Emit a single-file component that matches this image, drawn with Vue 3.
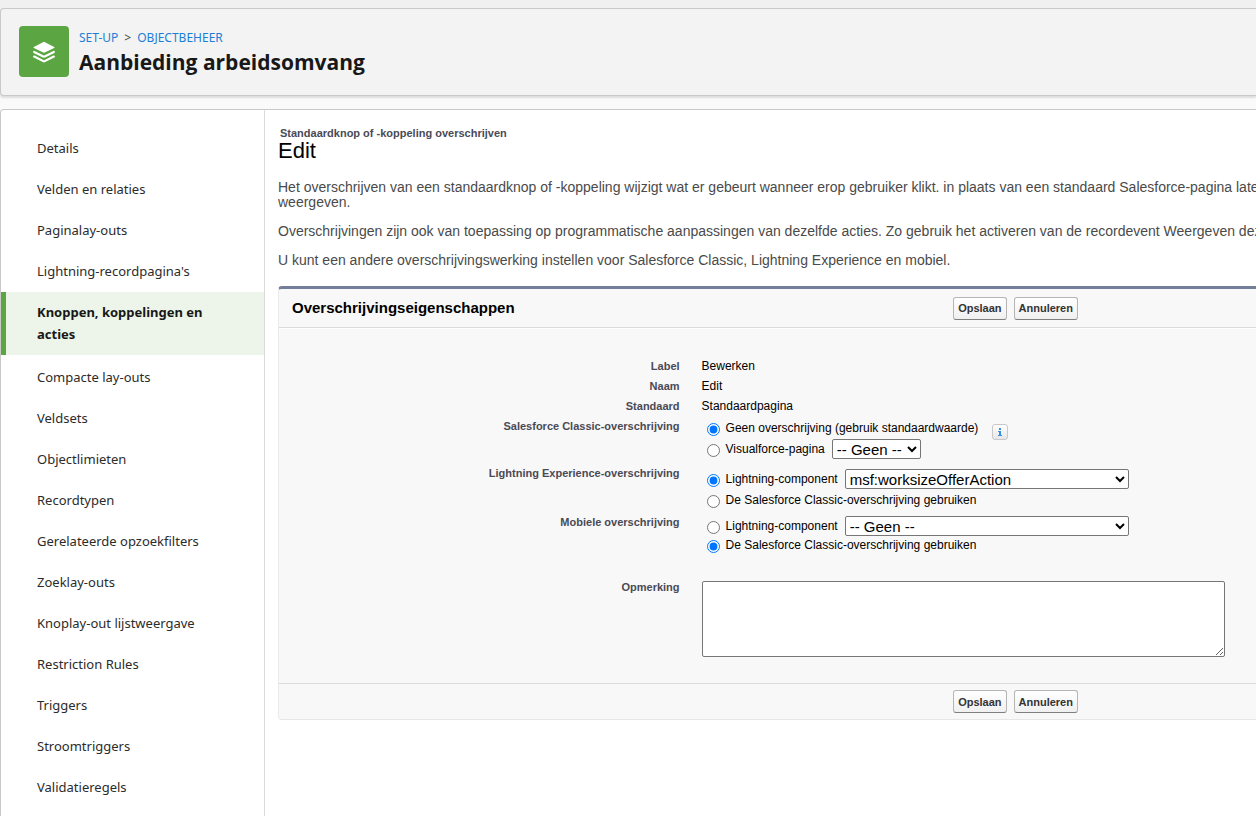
<script setup>
import { ref } from 'vue'

const navItems = [
  'Details',
  'Velden en relaties',
  'Paginalay-outs',
  "Lightning-recordpagina's",
  'Knoppen, koppelingen en acties',
  'Compacte lay-outs',
  'Veldsets',
  'Objectlimieten',
  'Recordtypen',
  'Gerelateerde opzoekfilters',
  'Zoeklay-outs',
  'Knoplay-out lijstweergave',
  'Restriction Rules',
  'Triggers',
  'Stroomtriggers',
  'Validatieregels',
]
const activeItem = 'Knoppen, koppelingen en acties'

const facts = [
  { label: 'Label', value: 'Bewerken' },
  { label: 'Naam', value: 'Edit' },
  { label: 'Standaard', value: 'Standaardpagina' },
]

const classic = ref('none')
const lightning = ref('component')
const mobile = ref('classic')
const comment = ref('')
</script>

<template>
  <div class="page">
    <header class="banner">
      <span class="banner-icon">
        <svg viewBox="0 0 22 22" width="22" height="22" aria-hidden="true">
          <path d="M11 0.8 21.2 6.1Q21.9 6.6 21.2 7.1L11.7 11.6Q11 11.9 10.3 11.6L0.8 7.1Q0.1 6.6 0.8 6.1Z" fill="#fff" />
          <path d="M1.2 10.9 10.3 15.4Q11 15.8 11.7 15.4L20.8 10.9M1.2 15.6 10.3 20.1Q11 20.5 11.7 20.1L20.8 15.6" fill="none" stroke="#fff" stroke-width="2.2" stroke-linecap="round" />
        </svg>
      </span>
      <div class="banner-text">
        <nav class="crumbs" aria-label="Kruimelpad">
          <a href="#">SET-UP</a><span class="sep">&gt;</span><a href="#">OBJECTBEHEER</a>
        </nav>
        <h1>Aanbieding arbeidsomvang</h1>
      </div>
    </header>

    <div class="workspace">
      <nav class="sidebar">
        <ul>
          <li v-for="item in navItems" :key="item" :class="{ active: item === activeItem }">
            <a href="#">{{ item }}</a>
          </li>
        </ul>
      </nav>

      <main class="content">
        <p class="kicker">Standaardknop of -koppeling overschrijven</p>
        <h2>Edit</h2>
        <div class="intro">
          <p>Het overschrijven van een standaardknop of -koppeling wijzigt wat er gebeurt wanneer erop gebruiker klikt. in plaats van een standaard Salesforce-pagina laten weergeven<br>weergeven.</p>
          <p>Overschrijvingen zijn ook van toepassing op programmatische aanpassingen van dezelfde acties. Zo gebruik het activeren van de recordevent Weergeven dezelfde</p>
          <p>U kunt een andere overschrijvingswerking instellen voor Salesforce Classic, Lightning Experience en mobiel.</p>
        </div>

        <form class="panel" @submit.prevent>
          <div class="bar bar-top">
            <h3>Overschrijvingseigenschappen</h3>
            <div class="actions">
              <button type="submit">Opslaan</button>
              <button type="button">Annuleren</button>
            </div>
          </div>

          <div class="fields">
            <div v-for="fact in facts" :key="fact.label" class="row">
              <span class="name">{{ fact.label }}</span>
              <span class="value">{{ fact.value }}</span>
            </div>

            <div class="row classic" role="radiogroup" aria-labelledby="classic-name">
              <span id="classic-name" class="name">Salesforce Classic-overschrijving</span>
              <div class="options">
                <div class="option">
                  <input id="classic-none" v-model="classic" type="radio" name="classic" value="none">
                  <label for="classic-none">Geen overschrijving (gebruik standaardwaarde)</label>
                  <button type="button" class="info" aria-label="Informatie">
                    <svg viewBox="0 0 14 14" width="14" height="14" aria-hidden="true">
                      <path d="M6 3h2v2H6zM5 6h3v4h1v1H5v-1h1V7H5z" fill="#3b8ede" />
                    </svg>
                  </button>
                </div>
                <div class="option">
                  <input id="classic-vf" v-model="classic" type="radio" name="classic" value="vf">
                  <label for="classic-vf">Visualforce-pagina</label>
                  <select class="short" aria-label="Visualforce-pagina"><option>-- Geen --</option></select>
                </div>
              </div>
            </div>

            <div class="row lightning" role="radiogroup" aria-labelledby="lightning-name">
              <span id="lightning-name" class="name">Lightning Experience-overschrijving</span>
              <div class="options">
                <div class="option">
                  <input id="lightning-component" v-model="lightning" type="radio" name="lightning" value="component">
                  <label for="lightning-component">Lightning-component</label>
                  <select class="long" aria-label="Lightning-component"><option>msf:worksizeOfferAction</option></select>
                </div>
                <div class="option">
                  <input id="lightning-classic" v-model="lightning" type="radio" name="lightning" value="classic">
                  <label for="lightning-classic">De Salesforce Classic-overschrijving gebruiken</label>
                </div>
              </div>
            </div>

            <div class="row mobile" role="radiogroup" aria-labelledby="mobile-name">
              <span id="mobile-name" class="name">Mobiele overschrijving</span>
              <div class="options">
                <div class="option">
                  <input id="mobile-component" v-model="mobile" type="radio" name="mobile" value="component">
                  <label for="mobile-component">Lightning-component</label>
                  <select class="long" aria-label="Lightning-component mobiel"><option>-- Geen --</option></select>
                </div>
                <div class="option">
                  <input id="mobile-classic" v-model="mobile" type="radio" name="mobile" value="classic">
                  <label for="mobile-classic">De Salesforce Classic-overschrijving gebruiken</label>
                </div>
              </div>
            </div>

            <div class="row comment">
              <label for="comment" class="name">Opmerking</label>
              <div class="options">
                <textarea id="comment" v-model="comment"></textarea>
              </div>
            </div>
          </div>

          <div class="bar bar-bottom">
            <div class="actions">
              <button type="submit">Opslaan</button>
              <button type="button">Annuleren</button>
            </div>
          </div>
        </form>
      </main>
    </div>
  </div>
</template>

<style>
body {
  margin: 0;
  overflow: hidden;
}
</style>

<style scoped>
.page {
  box-sizing: border-box;
  display: flex;
  flex-direction: column;
  gap: 13px;
  height: 100vh;
  padding-top: 8px;
  overflow: hidden;
  background: linear-gradient(#f0f0f0 0, #f0f0f0 90px, #fafafa 100px);
  font-family: "Liberation Sans", Arial, sans-serif;
  color: #000;
}

h1, h2, h3, p, ul {
  margin: 0;
  padding: 0;
}

.banner {
  display: flex;
  flex: none;
  gap: 10px;
  padding: 17px 18px 18px;
  border: 1px solid #c9c9c9;
  border-right: 0;
  border-radius: 4px 0 0 4px;
  background: #f3f3f3;
  box-shadow: 0 2px 2px rgba(0, 0, 0, 0.1);
  font-family: "Open Sans", "Segoe UI", sans-serif;
}

.banner-icon {
  display: flex;
  align-items: center;
  justify-content: center;
  width: 50px;
  height: 51px;
  border-radius: 4px;
  background: #5ba543;
}

.crumbs {
  display: flex;
  gap: 6px;
  padding-top: 2px;
  font-family: "Noto Sans", "Segoe UI", sans-serif;
  font-size: 12px;
  line-height: 20px;
}

.crumbs a {
  color: #1b7fd6;
  text-decoration: none;
}

.sep {
  color: #444;
}

h1 {
  font-size: 21px;
  line-height: 28px;
  font-weight: 700;
  color: #181818;
}

.workspace {
  display: flex;
  flex: 1 0 auto;
  border: 1px solid #c9c9c9;
  border-right: 0;
  border-bottom: 0;
  border-radius: 4px 0 0;
  background: #fff;
}

.sidebar {
  box-sizing: border-box;
  flex: none;
  width: 264px;
  padding-top: 18px;
  border-right: 1px solid #dddbda;
  font-family: "Noto Sans", "Segoe UI", sans-serif;
  font-size: 13px;
  line-height: 22px;
}

.sidebar ul {
  list-style: none;
}

.sidebar a {
  display: block;
  padding: 9px 40px 10px 36px;
  color: #2b2b2b;
  text-decoration: none;
}

.sidebar .active {
  margin-bottom: 2px;
  box-shadow: inset 5px 0 #5ba543;
  background: #edf5ea;
}

.sidebar .active a {
  color: #181818;
  font-weight: 700;
}

.content {
  flex: 1;
  min-width: 0;
  padding: 16px 0 0 13px;
}

.kicker {
  padding-left: 2px;
  font-size: 11px;
  line-height: 14px;
  font-weight: 700;
  color: #4a4a56;
}

h2 {
  font-size: 22px;
  line-height: 22px;
  font-weight: 400;
}

.intro {
  display: flex;
  flex-direction: column;
  gap: 14px;
  padding: 18px 0;
  overflow: hidden;
  font-size: 14px;
  line-height: 15px;
  color: #4a4a4a;
  white-space: nowrap;
}

.panel {
  border-top: 3px solid #747e9b;
  border-bottom: 1px solid #e6e6e6;
  border-left: 1px solid #eaeaea;
  border-radius: 4px 0 0 4px;
  background: #f8f8f8;
}

.bar {
  display: grid;
  grid-template-columns: 69% 1fr;
  align-items: center;
}

.bar-top {
  height: 38px;
  border-bottom: 1px solid #dbdbdb;
}

.bar-bottom {
  height: 35px;
  border-top: 1px solid #dbdbdb;
}

h3 {
  padding-left: 13px;
  font-size: 15px;
  line-height: 20px;
}

.actions {
  display: flex;
  grid-column: 2;
  gap: 7px;
}

.actions button {
  height: 23px;
  padding: 0 4px;
  border: 1px solid #b5b5b5;
  border-bottom-color: #7f7f7f;
  border-radius: 3px;
  background: linear-gradient(#fff, #f0f0f0);
  font: 700 11px "Liberation Sans", Arial, sans-serif;
  color: #333;
}

.fields {
  padding: 27px 0 26px;
  border-top: 1px solid #fff;
}

.row {
  display: grid;
  grid-template-columns: 41% 1fr;
  column-gap: 22px;
  font-size: 12px;
  line-height: 20px;
}

.name {
  font-size: 11px;
  font-weight: 700;
  text-align: right;
  color: #4a4a56;
}

.option {
  display: flex;
  align-items: center;
  height: 21px;
}

.option input {
  width: 13px;
  height: 13px;
  margin: 4px 6px 0 5px;
}

.option select {
  height: 20px;
  margin-left: 7px;
  padding: 0;
  border: 1px solid #767676;
  border-radius: 2px;
  background-color: #fff;
  font: 15px "Liberation Sans", Arial, sans-serif;
  color: #000;
}

.option .short {
  width: 89px;
}

.option .long {
  width: 284px;
}

.info {
  display: flex;
  width: 16px;
  height: 16px;
  margin: 8px 0 0 14px;
  padding: 0;
  border: 1px solid #c8c8c8;
  border-radius: 3px;
  background: linear-gradient(#fff, #e6e6e6);
}

.classic .options {
  padding-top: 1px;
}

.lightning {
  padding-top: 4px;
}

.lightning .options {
  padding-top: 5px;
}

.mobile {
  padding-top: 2px;
}

.mobile .options {
  padding-top: 4px;
}

.mobile .option {
  height: 19px;
}

.comment {
  padding-top: 23px;
}

textarea {
  box-sizing: border-box;
  display: block;
  width: 523px;
  height: 76px;
  margin-top: 4px;
  border: 1px solid #767676;
  border-radius: 2px;
  background: #fff;
  resize: both;
}
</style>
